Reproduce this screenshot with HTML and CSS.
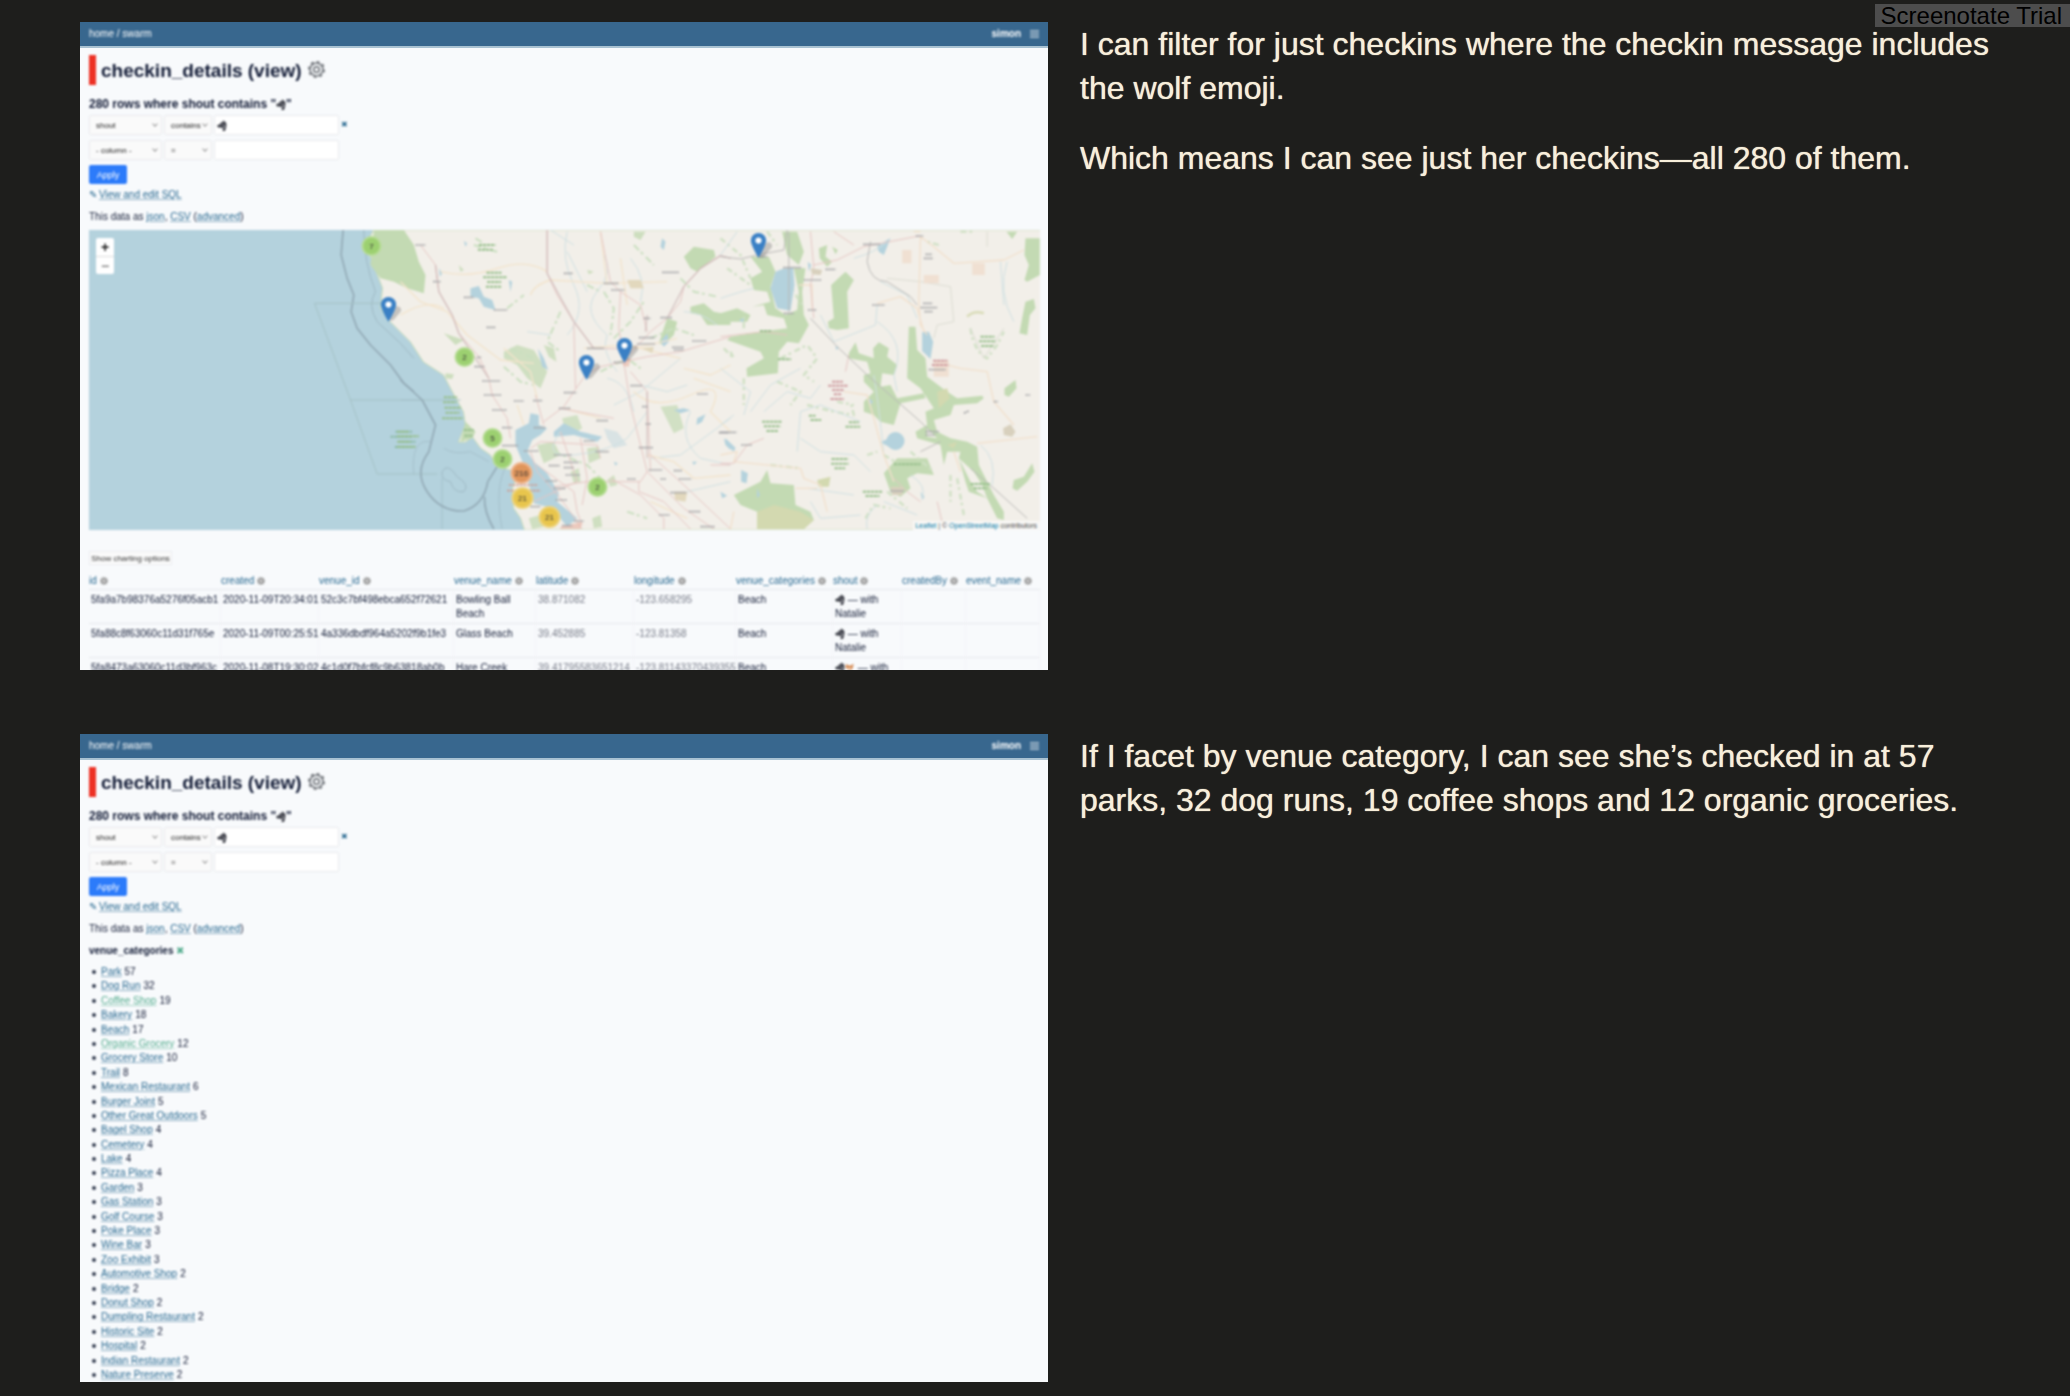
FILE: index.html
```html
<!DOCTYPE html>
<html lang="en">
<head>
<meta charset="utf-8">
<title>checkin_details</title>
<link rel="stylesheet" href="styles.css">
</head>
<body>
<svg class="defs" aria-hidden="true">
  <symbol id="wolf" viewBox="0 0 20 22"><path d="M0 11l6-3 3-4 2 1 2-5 2 4 2-1 2 6-1 7-2 6h-5l1-5-4-2-6 0z" fill="#3d3f48"/><path d="M7 10l2-1M13 9l2 5-2 4" stroke="#b5b7bd" stroke-width="2" fill="none"/></symbol>
  <symbol id="fox" viewBox="0 0 20 22"><path d="M2 4l5 3h5l5-4-1 8-4 6-3 2-4-5-4-3z" fill="#d58a52"/><path d="M5 11l4 6 4-6-4 2z" fill="#fff"/></symbol>
  <symbol id="gear" viewBox="0 0 24 24"><g fill="none" stroke="#666a70"><circle cx="12" cy="12" r="9" stroke-width="2"/><circle cx="12" cy="12" r="11" stroke-width="2" stroke-dasharray="4.300 4.300"/><circle cx="12" cy="12" r="4" stroke-width="2"/></g></symbol>
  <symbol id="cog" viewBox="0 0 8 8"><circle cx="4" cy="4" r="3" fill="#aaa" stroke="#8d8d8d" stroke-width="2" stroke-dasharray="1 1"/><circle cx="4" cy="4" r="1" fill="#ddd"/></symbol>
  <symbol id="pin" viewBox="0 0 25 41"><path d="M12.500 0C5.600 0 0 5.600 0 12.500c0 8 12.500 28.500 12.500 28.500S25 20.500 25 12.500C25 5.600 19.400 0 12.500 0z" fill="#3a80c5"/><circle cx="12.500" cy="12.500" r="5" fill="#fff"/></symbol>
</svg>

<main class="talk">
  <section class="slide">
    <div class="shot"><div class="screen">
      <header class="bar">
        <nav><a href="#">home</a> / <a href="#">swarm</a></nav>
        <div class="user"><strong>simon</strong><button class="menu" aria-label="Menu"><svg viewBox="0 0 9 8"><path d="M0 1h9M0 4h9M0 7h9" stroke="#fff"/></svg></button></div>
      </header>
      <div class="content">
        <div class="title"><h1>checkin_details (view)</h1><svg class="gear"><use href="#gear"/></svg></div>
        <h2>280 rows where shout contains "<svg class="emoji"><use href="#wolf"/></svg>"</h2>
        <form class="filters">
          <div class="filter">
            <span class="pick wide"><select aria-label="Column"><option>shout</option></select></span>
            <span class="pick"><select aria-label="Operator"><option>contains</option></select></span>
            <span class="value"><svg class="emoji"><use href="#wolf"/></svg><input type="text" aria-label="Value"></span>
            <a class="remove" href="#">✖</a>
          </div>
          <div class="filter">
            <span class="pick wide"><select aria-label="Column"><option>- column -</option></select></span>
            <span class="pick"><select aria-label="Operator"><option>=</option></select></span>
            <span class="value"><input type="text" aria-label="Value"></span>
          </div>
          <button class="apply" type="button">Apply</button>
        </form>
        <p class="sql"><span class="pencil">✎</span><a href="#">View and edit SQL</a></p>
        <p class="export">This data as <a href="#">json</a>, <a href="#">CSV</a> (<a href="#">advanced</a>)</p>
        <div class="map">
          <svg class="tiles" viewBox="0 0 952 300" preserveAspectRatio="xMidYMid slice">
            <rect width="952" height="300" fill="#b4d2dd"/>
            <path d="M285 0L278 14 284 32 294 58 292 78 300 90 322 112 335 132 355 145 364 162 375 182 377 195 370 212 377 212 384 207 392 218 402 225 409 237 422 240 429 245 424 258 425 278 432 288 436 300H952V0z" fill="#f2efe9" stroke="#c9dcb9"/>
            <g transform="translate(-8 -5) scale(.33333)" fill="none" stroke="#9fb9c4" stroke-width="3">
              <path d="M788 15L782 90 800 160 820 210 812 260 830 310 870 360 930 420 970 475 1000 500" stroke="#93aab6" stroke-width="5"/>
              <path d="M850 15Q850 110 885 200Q860 240 890 290L960 355 1000 400"/>
              <path d="M905 235H702L810 525 890 747H1070M810 525H1140" stroke="#a5c2c6"/>
              <path d="M945 620h50M930 635h65M955 650h50M943 666h60" stroke="#8bbaa5" stroke-width="6" stroke-dasharray="9 2"/>
            </g>
            <g transform="translate(312 -5) scale(.33333)" fill="none" stroke-linejoin="round">
              <g fill="#c3dab3">
                <path d="M-80 15H10L40 60 55 110 75 150 70 205 20 190-20 170-60 160-90 120z"/>
                <path d="M850 95L880 65 940 75 945 95 890 140 870 130zM870 245L910 235 940 260 990 270V300L920 300 900 270 870 265zM800 280L830 290 820 330 790 360 775 355z"/>
                <path d="M310 380L350 360 400 375 440 440 420 490 380 460 350 420 310 400zM430 360L460 370 468 410 445 395z" opacity=".75"/>
                <path d="M485 580L530 570 545 610 520 625 490 600zM780 545L830 540 850 610 820 625z" opacity=".7"/>
                <path d="M385 880L420 870 430 905 395 912zM575 880L600 870 605 905 580 910zM620 765L640 750 650 780 630 785zM510 740L535 730 540 770 520 775zM560 670L595 665 600 700 565 715zM410 660L460 650 480 690 430 715z" opacity=".75"/>
                <path d="M195 590L225 620 215 640 180 650z"/>
                <path d="M700 20H735L720 45 700 35zM135 445L160 448 155 462 135 460zM130 325L190 345 165 360zM175 120L190 135 180 140zM560 135L580 140 565 148z" opacity=".8"/>
              </g>
              <g stroke="#cadfc0" stroke-width="6" stroke-dasharray="22 8 9 12">
                <path d="M220 60L290 80M225 40L250 55M320 250L370 210M480 260L440 350 480 380M610 200L640 250 630 330M640 340L690 290 730 230M330 370L400 400M560 180L600 200M600 440L680 400 720 430M700 60L760 120"/>
                <path d="M750 340L820 310 880 330M840 160L880 200 950 215M460 680L560 720 600 760M680 860L740 880M310 425L360 470 400 480"/>
              </g>
              <g fill="#b4d2dd">
                <path d="M210 190L235 183 250 215 275 225 285 255 250 245 235 220 210 215z"/>
                <path d="M412 370L430 400 443 435 425 425z"/>
                <path d="M345 615L385 595 390 565 415 570 415 600 440 610 420 630 395 645 380 680 400 710 440 745 475 805 470 830 530 880 500 905 455 850 400 835 370 720 345 660z"/>
                <path d="M460 620L490 595 540 620 605 635 590 650 520 630 460 635z"/>
                <path d="M780 350L800 325 805 350 790 365zM820 555L850 550 870 556 840 565zM890 580L915 568 905 590 888 600zM970 640L990 660V675L975 660zM325 165L335 170 330 200zM190 48L200 55 195 65zM115 130L125 145 118 155zM785 40L795 50 790 75 780 65zM640 710L652 715 645 722zM875 710H890L880 720z"/>
                <path d="M610 610L650 620 680 660 640 670 620 640z" opacity=".4"/>
              </g>
              <g stroke="#cfe0e2" stroke-width="3">
                <path d="M500 20Q480 100 520 180T500 330M610 90Q640 140 590 200T620 330Q600 380 650 440M500 80L560 200M690 100Q740 160 720 230M850 260Q900 260 950 300M720 480L800 500 860 480M870 560Q830 640 900 700L990 720M480 620Q420 700 520 690T680 640L740 560M640 540L720 500 840 400M750 700L840 690 990 580M860 800L990 770M450 15L520 60M620 460Q680 470 700 560M380 320L450 330"/>
                <path d="M40 750Q30 640 90 650M130 670Q160 690 210 680L265 710M125 912V760M0 525H70M305 912Q280 780 320 720" stroke="#a5c0cb"/>
                <path d="M0 465L65 525 105 600 85 680Q40 740 80 800Q120 860 190 858Q250 840 262 770L290 725M280 912Q250 860 252 815" stroke="#93aab6" stroke-width="5"/>
                <path d="M125 740Q140 710 170 755Q210 780 190 800Q160 805 150 770Q120 765 125 740" stroke="#9fb9c4"/>
              </g>
              <g stroke="#f3e4cc" stroke-width="4">
                <path d="M0 170L60 230 140 260 200 330 300 405 400 415M120 140Q200 160 290 130T440 140M390 210Q400 180 450 165L620 175 800 170M310 370L390 440 410 520M0 270Q80 220 130 250M550 370L680 360 840 400M880 460L990 500M700 500Q760 560 870 510T930 560L990 620M740 690L820 710 880 760 990 750M350 540L370 600M490 550L600 580M850 430L930 450 990 420M600 20L620 180"/>
                <path d="M700 370L830 340M660 100L680 240M750 830L860 880"/>
              </g>
              <g stroke="#e6c6c3" stroke-width="3">
                <path d="M440 15V145L470 210 520 290 580 370 670 372M60 60L105 120 115 200 155 270 175 325 235 395 265 460 275 510 320 580 330 640M670 410L600 425 555 450 520 500 490 545 430 590M520 295L525 490M600 20L630 170 660 200 655 310 670 400M990 100L960 92 900 130 850 185 840 230 800 280 750 320 670 405M670 410L740 395 840 380 990 335M670 410L690 540 740 740M690 440L740 500 750 740M660 200L720 240 740 320M405 510L430 600"/>
                <path d="M390 670L420 650 590 660 600 700M390 680L410 740 480 820 530 890 545 912M410 720L520 800 530 860 545 900M480 620L530 770 400 830M480 550L640 580M740 740L850 850 940 912M740 740L720 770 560 770 460 785M630 760L720 810 790 880V912M715 770V800L790 830 870 912M750 690L850 780 990 912M930 720H990M540 640L560 760 545 840"/>
              </g>
              <g stroke="#cbb5b5" stroke-width="4" opacity=".75"><path d="M440 15V145L520 290 580 370M105 120L115 200 155 270 175 325 265 460M800 280L850 185 900 130 960 92 990 100M740 500L740 700M740 270L735 320"/></g>
              <path d="M480 905L545 890 540 912H480zM665 402L690 400 685 425 668 422z" fill="#e8b6a8" opacity=".65"/>
              <path d="M680 165L720 165 730 190 690 190zM725 370L760 365 755 385zM820 800L860 800 855 830 825 825z" fill="#e2d8bd"/>
              <g stroke="#a5a5a8" stroke-width="5" stroke-dasharray="7 2">
                <path d="M45 60h30M98 170h22M190 217h30M280 255h40M258 307h28M490 145h28M610 175h45M632 195h40M785 142h50M730 280h20M715 338h48M710 357h55M560 370h50M640 412h30M780 278h35M875 348h42M815 367h36M222 425h30M245 468h55M250 510h52M340 528h30M398 527h28M490 503h38M475 550h35M275 555h45M305 608h30M690 482h36M725 545h16M890 507h32M588 587h36M305 662h48M400 608h35M735 597h16M715 668h42M370 678h45M585 680h40M460 690h55M490 712h45M445 722h32M490 728h30M495 750h45M435 768h35M460 790h35M745 735h40M820 737h24M680 762h25M780 762h18M835 762h38M465 825h35M810 803h48M865 860h35M775 870h32M520 888h30M485 902h30M900 905h42M955 623h30M230 397h12M390 845h30M550 648h32M820 375h30"/>
              </g>
              <g stroke="#98c08d" stroke-width="6" stroke-dasharray="10 2">
                <path d="M258 143h45M248 157h70M260 171h42M256 185h48M235 60h50M232 74h45M130 517h40M128 532h40M132 548h50M135 563h42M125 580h62M-10 620h35M-10 634h65M-10 650h40M-10 665h55M190 615h30M192 632h26"/>
              </g>
              <path d="M320 797h100M325 780h85" stroke="#cf9a8e" stroke-width="5" stroke-dasharray="8 3"/>
            </g>
            <g transform="translate(632 -5) scale(.33333)" fill="none" stroke-linejoin="round">
              <g fill="#c3dab3">
                <path d="M90 95L145 95 165 140 150 185 165 250 195 270 230 255 235 200 220 130 255 130 245 200 250 270 265 300 235 355 200 350 175 380 172 445 80 455 78 430 130 400 120 380 20 345 30 335 120 320 200 310 190 280 140 270 130 240 95 245 150 230 140 200 100 195 90 160 125 140z"/>
                <path d="M0 265L50 250 90 270 80 290 30 290 0 300zM185 20H230L250 80 235 120 200 90zM295 70L320 60 315 95 335 110 320 125 298 100zM335 65L352 75 345 88z"/>
                <path d="M332 180L375 140 400 165 380 200 385 310 350 315 325 310 322 290 340 280z"/>
                <path d="M385 385L405 352 415 385 460 400 458 370 475 352 505 370 500 395 530 420 520 450 485 445 480 485 510 480 530 520 610 505 615 520 540 535 520 600 480 590 460 570 430 560 430 530 460 500 430 470 430 450 450 445 440 410 385 400z"/>
                <path d="M565 305L585 305 590 375 615 400 620 455 680 500 710 520 785 512 790 520 770 535 700 540 690 570 640 585 650 620 690 640 740 650 770 665 775 720 820 810 850 860 850 885 830 880 800 820 745 800 735 770 715 700 720 680 680 680 670 720 660 660 590 640 585 620 620 600 615 560 640 550 600 490 560 460z"/>
                <path d="M915 40H958V150L920 170 912 165 925 120 912 90zM915 230L940 222 945 250 928 270 920 330 897 325 905 280zM852 490L885 465 888 490 865 515 852 510zM935 715L942 740 920 770 890 797 876 790 880 765 910 755zM858 20H890L875 42z"/>
                <path d="M490 745L530 700 620 700 640 750 590 745 560 760 570 790 540 815 510 800zM40 810L120 770 140 735 150 775 220 780 225 840 270 860 280 885 250 912H110V860L60 840z"/>
              </g>
              <path d="M715 700L760 740 785 780 800 820 770 800 750 770zM620 610L650 640 620 635z" fill="#f2efe9"/>
              <path d="M110 860L160 840 240 860 280 885 250 912H110zM650 500L680 490 688 520 655 550zM680 660L710 650 700 670zM290 765L330 755 325 785 295 785z" fill="#d3d9b0"/>
              <g stroke="#cfe0c4" stroke-width="7" stroke-dasharray="18 9 8 12">
                <path d="M0 40L60 90 90 160M20 130L90 180M70 310V260M10 370L40 400 30 380M70 460V540M180 400L260 360 290 400 250 450 280 470M170 470L240 500 210 540M260 540L340 560 400 570 390 530M150 720L240 730M440 690L470 680M490 690L540 720M350 530L400 540M570 680L640 740M690 750V830M710 760L730 870M435 880L460 840 510 850M200 170L245 240M500 800L560 850M140 20L170 60M655 60L620 50M750 310Q760 380 800 400L830 360 850 320M720 20h40"/>
              </g>
              <g fill="#b4d2dd">
                <path d="M185 132L218 128 222 180 210 257 170 250 150 190 165 140z"/><path d="M605 322L625 320 638 350 630 402 605 378z"/><circle cx="525" cy="648" r="27"/><path d="M480 652L505 640V665z"/>
                <path d="M15 640L45 668 40 680 18 660zM62 735L82 745 78 775 62 770zM470 65L500 45 510 40 490 90 475 80zM262 110L272 120 265 140zM55 285L70 280 68 292zM445 520L458 530 448 540zM600 800L612 815 605 825zM0 800L20 812 5 820zM110 790L118 810 110 820zM345 362L355 370 347 374z"/>
              </g>
              <g stroke="#cfe0e2" stroke-width="3">
                <path d="M0 220Q60 200 100 190M0 430L90 500 70 570M90 560L150 480 240 430M130 560L200 500 270 520 300 480M230 680L240 560 300 540 420 590M240 640L300 680 400 690 450 740M470 290Q560 350 520 450L530 500M300 270L340 350 440 310 465 300 470 240M480 170L560 210 590 280M0 90L50 20M860 110Q830 200 880 290M840 110L850 240M570 750Q620 780 605 820M440 912Q430 870 470 840M260 790L400 810M460 450Q480 580 490 690M780 660Q830 700 815 780M400 100Q470 80 500 50M40 570L0 600M270 830L300 880 420 870M490 830L590 870"/>
              </g>
              <g stroke="#dcdcd2" stroke-width="3"><path d="M500 160L600 170 690 185 700 290 650 300 640 340M800 20V65M750 310L790 400 850 310"/></g>
              <g stroke="#f2e0cc" stroke-width="4">
                <path d="M600 35L640 65 700 115 850 105 910 75M600 35L595 230 600 300 620 330M640 410L720 430 800 440 820 530 880 600M770 655L950 635M470 235L540 215 590 250 610 320M235 180L275 180 275 255M370 500L440 510 460 580 490 690 520 770M0 690L50 680 40 710 240 730 250 760 300 780 320 860M225 790H290M40 860L30 912M600 20L580 20M700 680L720 740"/>
                <path d="M740 275Q760 255 790 265" stroke="#d9dcb8" stroke-width="8"/>
              </g>
              <g stroke="#e6c6c3" stroke-width="3"><path d="M0 335L130 320 200 330M270 20L280 130 270 180 280 280M280 120L350 105 430 65 600 32M340 20L400 60M0 715H40L80 660 130 640M520 760L560 800 600 830M650 830L670 912M385 390L375 440"/></g>
              <g stroke="#b9b8b6" stroke-width="3"><path d="M0 95L60 102 110 90 190 75 200 15M205 20V260M270 280L350 365 440 450 600 590 630 620M450 50L440 110Q450 170 500 170L570 215 590 240M750 730L820 790 920 880M600 680L660 650"/></g>
              <path d="M545 75h28v40h-28zM610 150h45v25h-45zM755 115h38v35h-38zM640 405h45v50h-45z" fill="#f0e0d2"/>
              <path d="M848 610L870 598 885 620 875 635 850 630zM510 785L550 785 545 810 515 810zM270 130L305 135 300 150 275 148z" fill="#d8d0bd"/>
              <g stroke="#a5a5a8" stroke-width="5" stroke-dasharray="7 2"><path d="M428 58h50M586 33h22M315 133h30M188 128h55M250 165h52M262 255h26M455 240h38M608 235h28M600 248h50M612 260h24M610 100h28M615 88h20M625 434h50M0 622h48M62 660h32M615 620h40M615 630h30M510 798h40M110 95h30M190 265h30M820 530h12M915 510h14M730 565L745 558"/></g>
              <g stroke="#98c08d" stroke-width="6" stroke-dasharray="10 2"><path d="M125 590h58M130 604h50M138 618h34M333 702h50M332 716h52M342 730h32M427 800h58M435 813h42M780 335h42M776 349h50M782 363h38M520 718h80M385 592h30M375 605h44M265 572h20M270 585h32M172 403h40M750 777h60M760 790h40M118 318h35"/></g>
              <g stroke="#cf9ba0" stroke-width="6" stroke-dasharray="10 2"><path d="M335 470h32M323 482h60M335 495h36M340 508h22M330 522h40M638 407h42M634 420h50"/></g>
            </g>
            <g font-family="Liberation Sans, Arial, sans-serif" font-size="8" text-anchor="middle" fill="#333">
              <g fill="#9cd070" stroke="#b5dc93" stroke-width="2"><circle cx="283" cy="16" r="9"/><circle cx="376" cy="127" r="9"/><circle cx="404" cy="208" r="9"/><circle cx="414" cy="229" r="9"/><circle cx="509" cy="257" r="9"/></g>
              <circle cx="433" cy="243" r="10" fill="#e0955b" stroke="#efb58c" stroke-width="2"/>
              <g fill="#e8c54c" stroke="#eed37b" stroke-width="2"><circle cx="434" cy="268" r="10"/><circle cx="461" cy="287" r="10"/></g>
              <text x="283" y="19">7</text><text x="376" y="130">2</text><text x="404" y="211">5</text><text x="414" y="232">2</text><text x="509" y="260">2</text><text x="433" y="246">216</text><text x="434" y="271">21</text><text x="461" y="290">21</text>
            </g>
            <g stroke="#555" stroke-width="7" stroke-linecap="round" opacity=".28"><path d="M303 87l6-7M501 145l7-8M539 127l7-8M673 24l7-8"/></g>
            <g><use href="#pin" x="292" y="67" width="16" height="25"/><use href="#pin" x="490" y="125" width="16" height="25"/><use href="#pin" x="528" y="108" width="16" height="25"/><use href="#pin" x="662" y="3" width="16" height="25"/></g>
          </svg>
          <div class="zoom"><button aria-label="Zoom in">+</button><button aria-label="Zoom out">−</button></div>
          <div class="credit"><a href="#">Leaflet</a> | © <a href="#">OpenStreetMap</a> contributors</div>
        </div>
        <button class="charting">Show charting options</button>
        <table>
          <colgroup><col class="c-id"><col class="c-created"><col class="c-venue"><col class="c-name"><col class="c-lat"><col class="c-lon"><col class="c-cat"><col class="c-shout"><col class="c-by"><col class="c-event"></colgroup>
          <thead><tr>
            <th><a href="#">id</a><svg><use href="#cog"/></svg></th><th><a href="#">created</a><svg><use href="#cog"/></svg></th><th><a href="#">venue_id</a><svg><use href="#cog"/></svg></th><th><a href="#">venue_name</a><svg><use href="#cog"/></svg></th><th><a href="#">latitude</a><svg><use href="#cog"/></svg></th><th><a href="#">longitude</a><svg><use href="#cog"/></svg></th><th><a href="#">venue_categories</a><svg><use href="#cog"/></svg></th><th><a href="#">shout</a><svg><use href="#cog"/></svg></th><th><a href="#">createdBy</a><svg><use href="#cog"/></svg></th><th><a href="#">event_name</a><svg><use href="#cog"/></svg></th>
          </tr></thead>
          <tbody>
            <tr><td>5fa9a7b98376a5276f05acb1</td><td class="date">2020-11-09T20:34:01</td><td>52c3c7bf498ebca652f72621</td><td>Bowling Ball Beach</td><td class="num">38.871082</td><td class="num">-123.658295</td><td>Beach</td><td><svg class="emoji"><use href="#wolf"/></svg> — with Natalie</td><td></td><td></td></tr>
            <tr><td>5fa88c8f63060c11d31f765e</td><td class="date">2020-11-09T00:25:51</td><td>4a336dbdf964a5202f9b1fe3</td><td>Glass Beach</td><td class="num">39.452885</td><td class="num">-123.81358</td><td>Beach</td><td><svg class="emoji"><use href="#wolf"/></svg> — with Natalie</td><td></td><td></td></tr>
            <tr><td>5fa8473a63060c11d3bf963c</td><td class="date">2020-11-08T19:30:02</td><td>4c1d0f7bfcf8c9b63818ab0b</td><td>Hare Creek</td><td class="num">39.41795583651214</td><td class="num">-123.81143370439355</td><td>Beach</td><td><svg class="emoji"><use href="#wolf"/></svg><svg class="emoji"><use href="#fox"/></svg> — with</td><td></td><td></td></tr>
          </tbody>
        </table>
      </div>
    </div></div>
    <div class="notes">
      <p>I can filter for just checkins where the checkin message includes the wolf emoji.</p>
      <p>Which means I can see just her checkins—all 280 of them.</p>
    </div>
  </section>

  <section class="slide">
    <div class="shot"><div class="screen">
      <header class="bar">
        <nav><a href="#">home</a> / <a href="#">swarm</a></nav>
        <div class="user"><strong>simon</strong><button class="menu" aria-label="Menu"><svg viewBox="0 0 9 8"><path d="M0 1h9M0 4h9M0 7h9" stroke="#fff"/></svg></button></div>
      </header>
      <div class="content">
        <div class="title"><h1>checkin_details (view)</h1><svg class="gear"><use href="#gear"/></svg></div>
        <h2>280 rows where shout contains "<svg class="emoji"><use href="#wolf"/></svg>"</h2>
        <form class="filters">
          <div class="filter">
            <span class="pick wide"><select aria-label="Column"><option>shout</option></select></span>
            <span class="pick"><select aria-label="Operator"><option>contains</option></select></span>
            <span class="value"><svg class="emoji"><use href="#wolf"/></svg><input type="text" aria-label="Value"></span>
            <a class="remove" href="#">✖</a>
          </div>
          <div class="filter">
            <span class="pick wide"><select aria-label="Column"><option>- column -</option></select></span>
            <span class="pick"><select aria-label="Operator"><option>=</option></select></span>
            <span class="value"><input type="text" aria-label="Value"></span>
          </div>
          <button class="apply" type="button">Apply</button>
        </form>
        <p class="sql"><span class="pencil">✎</span><a href="#">View and edit SQL</a></p>
        <p class="export">This data as <a href="#">json</a>, <a href="#">CSV</a> (<a href="#">advanced</a>)</p>
        <p class="facet"><strong>venue_categories</strong> <a class="seen" href="#">✖</a></p>
        <ul class="facets">
          <li><a href="#">Park</a> 57</li>
          <li><a href="#">Dog Run</a> 32</li>
          <li><a class="seen" href="#">Coffee Shop</a> 19</li>
          <li><a href="#">Bakery</a> 18</li>
          <li><a href="#">Beach</a> 17</li>
          <li><a class="seen" href="#">Organic Grocery</a> 12</li>
          <li><a href="#">Grocery Store</a> 10</li>
          <li><a href="#">Trail</a> 8</li>
          <li><a href="#">Mexican Restaurant</a> 6</li>
          <li><a href="#">Burger Joint</a> 5</li>
          <li><a href="#">Other Great Outdoors</a> 5</li>
          <li><a href="#">Bagel Shop</a> 4</li>
          <li><a href="#">Cemetery</a> 4</li>
          <li><a href="#">Lake</a> 4</li>
          <li><a href="#">Pizza Place</a> 4</li>
          <li><a href="#">Garden</a> 3</li>
          <li><a href="#">Gas Station</a> 3</li>
          <li><a href="#">Golf Course</a> 3</li>
          <li><a href="#">Poke Place</a> 3</li>
          <li><a href="#">Wine Bar</a> 3</li>
          <li><a href="#">Zoo Exhibit</a> 3</li>
          <li><a href="#">Automotive Shop</a> 2</li>
          <li><a href="#">Bridge</a> 2</li>
          <li><a href="#">Donut Shop</a> 2</li>
          <li><a href="#">Dumpling Restaurant</a> 2</li>
          <li><a href="#">Historic Site</a> 2</li>
          <li><a href="#">Hospital</a> 2</li>
          <li><a href="#">Indian Restaurant</a> 2</li>
          <li><a href="#">Nature Preserve</a> 2</li>
        </ul>
      </div>
    </div></div>
    <div class="notes">
      <p>If I facet by venue category, I can see she’s checked in at 57 parks, 32 dog runs, 19 coffee shops and 12 organic groceries.</p>
    </div>
  </section>
</main>
<div class="trial">Screenotate Trial</div>
</body>
</html>
```
FILE: styles.css
```css
* { box-sizing: border-box; }

body {
  margin: 0;
  background: #1e1e1c;
  color: #f8efdb;
  font-family: "Liberation Sans", Arial, sans-serif;
}

h1, h2, p, ul { margin: 0; padding: 0; }
button, select, input { font-family: inherit; margin: 0; }
.defs { display: none; }

.talk {
  display: flex;
  flex-direction: column;
  gap: 64px;
  padding: 22px 48px 14px 80px;
}

.slide {
  display: grid;
  grid-template-columns: 968fr 942fr;
  gap: 32px;
}

.notes {
  font-size: 32px;
  line-height: 44px;
  text-shadow: 0 0 1px #f8efdb;
}

.notes p + p { margin-top: 26px; }

.trial {
  position: absolute;
  top: 4px;
  right: 0;
  padding: 0 8px 0 6px;
  background: #4d4d4d;
  color: #000;
  font-size: 24px;
  line-height: 23px;
}

/* Screens, shown as small low-resolution captures */
.shot {
  aspect-ratio: 968 / 648;
  min-height: 0;
  overflow: hidden;
  background: #f8fafc;
  color: #111a35;
  font-size: 10px;
  line-height: 14px;
}

.screen {
  display: flex;
  flex-direction: column;
  height: 100%;
}

.screen .content, .bar > * { filter: blur(1px); }

.screen a {
  color: #276890;
  text-decoration-color: #27689080;
}

.screen a.seen {
  color: #54ac8e;
  text-decoration-color: #54ac8e80;
}

.screen .bar {
  display: flex;
  flex: none;
  justify-content: space-between;
  align-items: center;
  height: 26px;
  padding: 0 9px;
  background: #38678e;
  border-bottom: 2px solid #a9c2d2;
  color: #fff;
}

.screen .bar a { color: inherit; text-decoration: none; }
.user { display: flex; align-items: center; gap: 9px; }

.menu {
  display: flex;
  padding: 0;
  border: 0;
  background: none;
}

.menu svg { width: 9px; height: 8px; }

.content {
  display: flex;
  flex: 1;
  flex-direction: column;
  min-height: 0;
  padding: 7px 8px 0 9px;
}

.title {
  display: flex;
  flex: none;
  gap: 6px;
  height: 30px;
  padding: 0 0 0 5px;
  border-left: 7px solid #ed3124;
}

.title h1 { font-size: 19px; line-height: 32px; }
.gear { width: 17px; height: 17px; margin-top: 6px; }
.content h2 { margin-top: 10px; font-size: 12px; line-height: 18px; }
.emoji { width: 10px; height: 11px; vertical-align: -2px; }

.filters {
  display: flex;
  flex-direction: column;
  align-items: flex-start;
  gap: 5px;
  margin-top: 2px;
}

.filter { display: flex; align-items: center; gap: 2px; }

.pick {
  position: relative;
  width: 48px;
  height: 20px;
}

.pick.wide { width: 73px; }

.pick::after {
  content: "";
  position: absolute;
  top: 7px;
  right: 5px;
  width: 3px;
  height: 3px;
  border: solid #999;
  border-width: 0 1px 1px 0;
  transform: rotate(45deg);
}

.pick select {
  width: 100%;
  height: 100%;
  padding: 0 0 0 6px;
  border: 1px solid #e8eaec;
  border-radius: 2px;
  background: #fafafa;
  color: #222;
  font-size: 8px;
  appearance: none;
}

.value {
  display: flex;
  align-items: center;
  width: 125px;
  height: 20px;
  padding: 0 4px 0 2px;
  border: 1px solid #e8eaec;
  border-radius: 2px;
  background: #fff;
}

.value input {
  flex: 1;
  min-width: 0;
  padding: 0;
  border: 0;
  background: none;
  font-size: 9px;
}

.screen .remove { font-size: 8px; text-decoration: none; }

.apply {
  width: 38px;
  height: 19px;
  padding: 0;
  border: 0;
  border-radius: 2px;
  background: #2c7bfa;
  color: #fff;
  font-size: 9px;
}

.sql { display: flex; margin-top: 4px; }
.pencil { width: 10px; color: #276890; }
.export { margin-top: 8px; }
.facet { margin-top: 8px; }
.screen .facet a { text-decoration: none; }

.facets {
  display: flex;
  flex: 1;
  flex-direction: column;
  justify-content: space-between;
  margin-top: 7px;
  list-style: none;
}

.facets li { display: flex; align-items: center; gap: 3px; }

.facets li::before {
  content: "";
  width: 4px;
  height: 4px;
  margin: 0 2px 0 3px;
  border-radius: 50%;
  background: #333b50;
}

.map {
  position: relative;
  flex: none;
  height: 300px;
  margin-top: 6px;
  overflow: hidden;
}

.tiles { display: block; width: 100%; height: 100%; }

.zoom {
  position: absolute;
  top: 8px;
  left: 7px;
  width: 18px;
  border-radius: 2px;
  background: #fff;
}

.zoom button {
  display: block;
  width: 18px;
  height: 18px;
  padding: 0;
  border: 0;
  background: none;
  color: #222;
  font-size: 14px;
  font-weight: bold;
  line-height: 18px;
}

.zoom button + button { border-top: 1px solid #ddd; color: #888; }

.credit {
  position: absolute;
  right: 0;
  bottom: 0;
  padding: 0 3px 0 2px;
  background: #f9f8f6;
  color: #444;
  font-size: 7px;
  line-height: 9px;
}

.screen .credit a { color: #0078a8; text-decoration: none; }

.charting {
  align-self: flex-start;
  flex: none;
  width: 83px;
  height: 14px;
  margin-top: 21px;
  padding: 0;
  border: 1px solid #eceef0;
  background: #fafafa;
  color: #333;
  font-size: 8px;
}

table {
  width: 100%;
  margin-top: 8px;
  border-collapse: separate;
  border-spacing: 0;
  table-layout: fixed;
}

.c-id { width: 132px; }
.c-created { width: 98px; }
.c-venue { width: 135px; }
.c-name { width: 82px; }
.c-lat { width: 98px; }
.c-lon { width: 102px; }
.c-cat { width: 97px; }
.c-shout { width: 69px; }
.c-by { width: 64px; }
.c-event { width: 74px; }

th {
  height: 17px;
  padding: 0;
  border-bottom: 1px solid #e6e9ec;
  font-weight: normal;
  text-align: left;
  white-space: nowrap;
}

.screen th a { text-decoration: none; }
th svg { width: 8px; height: 8px; margin-left: 3px; vertical-align: -1px; }

td {
  padding: 3px 2px 2px;
  border-right: 1px solid #f4f6f8;
  border-bottom: 1px solid #e6e9ec;
  vertical-align: top;
}

td:nth-child(8) { padding-right: 6px; }
.date { padding-right: 0; white-space: nowrap; }
.num { color: #777b88; }
```
